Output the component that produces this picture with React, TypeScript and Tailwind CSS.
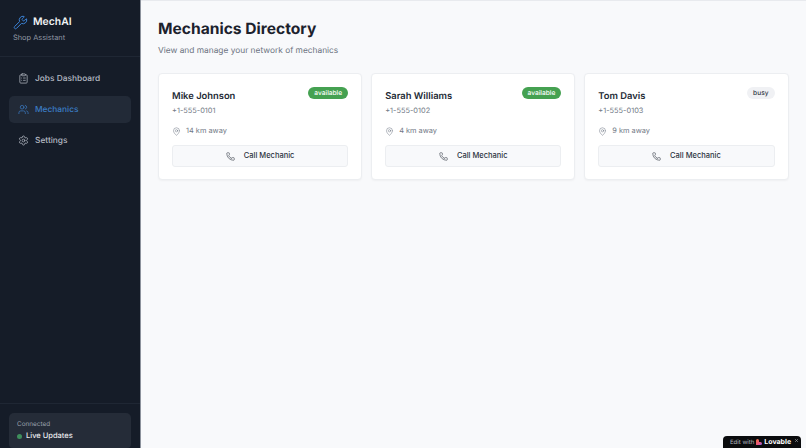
import { ClipboardList, MapPin, Phone, Settings, Users, Wrench, X } from 'lucide-react';

const MECHANICS = [
  { name: 'Mike Johnson', phone: '+1-555-0101', distance: '14 km away', status: 'available' },
  { name: 'Sarah Williams', phone: '+1-555-0102', distance: '4 km away', status: 'available' },
  { name: 'Tom Davis', phone: '+1-555-0103', distance: '9 km away', status: 'busy' },
];

const NAV_ITEMS = [
  { label: 'Jobs Dashboard', icon: ClipboardList },
  { label: 'Mechanics', icon: Users, active: true },
  { label: 'Settings', icon: Settings },
];

export default function App() {
  return (
    <div className="h-[448px] w-[806px] overflow-hidden flex bg-[#f8f9fb] font-['Inter',sans-serif] [text-rendering:geometricPrecision] relative">
      {/* Sidebar */}
      <aside className="w-[141px] shrink-0 bg-[#151c28] border-r border-[#8c929c] flex flex-col">
        <div className="h-[57px] pt-[14px] pl-[13px] border-b border-[#1f2734]">
          <div className="flex items-center gap-[5px]">
            <Wrench size={15} strokeWidth={1.6} className="text-[#3b82d6]" />
            <span className="text-[10.4px] leading-[16px] font-semibold text-[#f1f3f5]">MechAI</span>
          </div>
          <p className="mt-[2px] text-[7.4px] leading-[12px] text-[#8f96a3]">Shop Assistant</p>
        </div>

        <nav className="flex-1 px-[9px] pt-[8px] flex flex-col gap-[4px]">
          {NAV_ITEMS.map(item => {
            const Icon = item.icon;
            return (
              <div
                key={item.label}
                className={
                  'h-[27px] flex items-center gap-[6px] px-[9px] rounded-[5px] text-[8.35px] font-medium ' +
                  (item.active ? 'bg-[#222a37] text-[#3b7cc4]' : 'text-[#b3b9c2]')
                }
              >
                <Icon size={11} strokeWidth={1.6} />
                <span className="pt-[1px]">{item.label}</span>
              </div>
            );
          })}
        </nav>

        <div className="border-t border-[#1f2734] px-[9px] pt-[9px] pb-0">
          <div className="h-[35px] rounded-t-[5px] rounded-b-[4px] bg-[#252c38] px-[8px] pt-[6px]">
            <p className="text-[6.4px] leading-[11px] text-[#9aa1ac]">Connected</p>
            <div className="flex items-center gap-[4px]">
              <span className="w-[5px] h-[5px] rounded-full bg-[#3f8f5c]" />
              <span className="text-[7.5px] leading-[12px] font-medium text-[#e9ebee]">Live Updates</span>
            </div>
          </div>
        </div>
      </aside>

      {/* Main */}
      <main className="flex-1 min-w-0 border-t border-[#e8eaee] pl-[17px] pr-[17.5px] pt-[18px]">
        <h1 className="text-[15.6px] leading-[20px] font-bold text-[#1c222d]">Mechanics Directory</h1>
        <p className="mt-[6px] text-[8.35px] leading-[12px] text-[#6b7280]">View and manage your network of mechanics</p>

        <div className="mt-[16px] grid grid-cols-3 gap-[9px]">
          {MECHANICS.map(m => (
            <div key={m.name} className="h-[107px] rounded-[4px] bg-white border border-[#eceef1] shadow-[0_1px_2px_rgba(0,0,0,0.04)] px-[13px] pt-[13px]">
              <div className="flex items-start justify-between">
                <span className="mt-[2px] text-[9.4px] leading-[15px] font-semibold text-[#232a35]">{m.name}</span>
                <span
                  className={
                    'h-[12px] px-[6px] rounded-full text-[6.6px] leading-[12px] font-medium ' +
                    (m.status === 'available' ? 'bg-[#45a151] text-white' : 'bg-[#f0f1f4] text-[#333a45]')
                  }
                >
                  {m.status}
                </span>
              </div>
              <p className="mt-[1px] text-[7.4px] leading-[12px] text-[#727986]">{m.phone}</p>
              <div className="mt-[8px] flex items-center gap-[5px] text-[7.4px] leading-[12px] text-[#727986]">
                <MapPin size={9} strokeWidth={1.4} />
                <span>{m.distance}</span>
              </div>
              <button className="mt-[8px] w-full h-[22px] rounded-[3px] bg-[#f8f9fb] border border-[#eceef1] flex items-center justify-center gap-[9px] text-[7.5px] font-medium text-[#2b323d]">
                <Phone size={9} strokeWidth={1.5} />
                <span>Call Mechanic</span>
              </button>
            </div>
          ))}
        </div>
      </main>

      {/* Lovable badge */}
      <div className="absolute right-[5px] bottom-0 w-[78px] h-[12px] bg-[#0b0c0e] rounded-t-[4px] flex items-center pl-[7px]">
        <span className="text-[6px] text-[#b8bbc0]">Edit with</span>
        <svg width="6" height="6" viewBox="0 0 6 6" className="ml-[2px] mr-[2px]">
          <defs>
            <linearGradient id="lovable" x1="0" y1="0" x2="1" y2="1">
              <stop offset="0" stopColor="#f0703c" />
              <stop offset="0.6" stopColor="#e8577e" />
              <stop offset="1" stopColor="#8a5cf0" />
            </linearGradient>
          </defs>
          <path d="M0 1.5a1.5 1.5 0 0 1 3 0V3H4.5a1.5 1.5 0 0 1 0 3H0Z" fill="url(#lovable)" />
        </svg>
        <span className="text-[7px] font-bold text-white">Lovable</span>
        <X size={5} strokeWidth={2.5} className="absolute right-[2px] top-[2px] text-[#b8bbc0]" />
      </div>
    </div>
  );
}
